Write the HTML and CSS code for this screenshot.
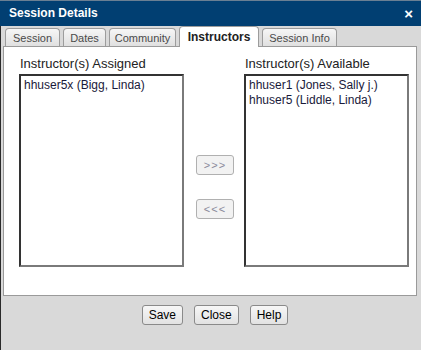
FILE: index.html
```html
<!DOCTYPE html>
<html>
<head>
<meta charset="utf-8">
<link rel="stylesheet" href="styles.css">
</head>
<body>
<div class="dialog">
  <div class="titlebar">
    <span class="title">Session Details</span>
    <span class="close">×</span>
  </div>
  <div class="tabs">
    <div class="tab w-session">Session</div>
    <div class="tab w-dates">Dates</div>
    <div class="tab w-community">Community</div>
    <div class="tab active w-instr">Instructors</div>
    <div class="tab w-info">Session Info</div>
  </div>
  <div class="panel">
    <div class="col">
      <div class="label">Instructor(s) Assigned</div>
      <div class="listbox">
        <div class="item">hhuser5x (Bigg, Linda)</div>
      </div>
    </div>
    <div class="mid">
      <button class="move">&gt;&gt;&gt;</button>
      <button class="move">&lt;&lt;&lt;</button>
    </div>
    <div class="col">
      <div class="label">Instructor(s) Available</div>
      <div class="listbox">
        <div class="item">hhuser1 (Jones, Sally j.)</div>
        <div class="item">hhuser5 (Liddle, Linda)</div>
      </div>
    </div>
  </div>
  <div class="footer">
    <button class="btn">Save</button>
    <button class="btn">Close</button>
    <button class="btn">Help</button>
  </div>
</div>
</body>
</html>
```

FILE: styles.css
```css
* { box-sizing: border-box; }
html, body { margin: 0; padding: 0; }
body {
  width: 421px;
  height: 350px;
  overflow: hidden;
  font-family: "Liberation Sans", Arial, sans-serif;
  background: #d9d9d9;
}
.dialog {
  width: 421px;
  height: 350px;
  background: #d9d9d9;
  box-shadow: inset 1px 0 0 #2a2a2a;
  display: flex;
  flex-direction: column;
}
.titlebar {
  height: 26px;
  background: #013f72;
  border-top: 1px solid #6a7f93;
  display: flex;
  align-items: center;
  justify-content: space-between;
  padding: 0 8px 0 9px;
  color: #fff;
}
.title {
  font-weight: bold;
  font-size: 12px;
  margin-top: -1px;
}
.close {
  font-weight: bold;
  font-size: 15px;
  line-height: 1;
}
.tabs {
  display: flex;
  align-items: flex-end;
  gap: 3px;
  padding-left: 5px;
  margin-top: 0;
  height: 20px;
  position: relative;
  z-index: 1;
}
.tab {
  height: 18px;
  border: 1px solid #9c9c9c;
  border-bottom: none;
  border-radius: 4px 4px 0 0;
  background: linear-gradient(#f6f6f6, #e0e0e0);
  color: #4a4a4a;
  font-size: 11px;
  display: flex;
  align-items: center;
  justify-content: center;
  padding-top: 1px;
}
.tab.active {
  height: 21px;
  margin-bottom: -1px;
  background: #fff;
  color: #222;
  font-weight: bold;
  font-size: 12px;
  padding-top: 0;
}
.w-session { width: 55px; }
.w-dates { width: 43px; }
.w-community { width: 67px; }
.w-instr { width: 80px; }
.w-info { width: 75px; }
.panel {
  margin: 0 4px 0 3px;
  height: 250px;
  background: #fff;
  border: 1px solid #9a9a9a;
  display: grid;
  grid-template-columns: 165px 1fr 165px;
  padding: 9px 7px 0 15px;
}
.label {
  font-size: 13px;
  color: #222;
  padding-left: 1px;
  height: 18px;
  line-height: 15px;
}
.listbox {
  height: 193px;
  border: 2px solid;
  border-color: #333 #7a7a7a #7a7a7a #333;
  padding: 2px 0 0 3px;
  font-size: 12px;
  color: #1a1a3a;
}
.item {
  line-height: 15px;
  height: 15px;
}
.mid {
  display: flex;
  flex-direction: column;
  align-items: center;
  padding-top: 99px;
  padding-left: 2px;
  gap: 24px;
}
.move {
  width: 38px;
  height: 20px;
  padding: 0;
  border: 1px solid #b0b0b0;
  border-radius: 3px;
  background: #f2f2f2;
  color: #8a8a9a;
  font-family: "Liberation Sans", Arial, sans-serif;
  font-size: 11px;
  letter-spacing: 1px;
}
.footer {
  display: flex;
  justify-content: center;
  gap: 11px;
  padding: 9px 0 0 9px;
}
.btn {
  height: 20px;
  padding: 0 6px;
  border: 1px solid #8a8a8a;
  border-radius: 3px;
  background: linear-gradient(#f7f7f7, #e2e2e2);
  color: #000;
  font-family: "Liberation Sans", Arial, sans-serif;
  font-size: 12px;
}
```
